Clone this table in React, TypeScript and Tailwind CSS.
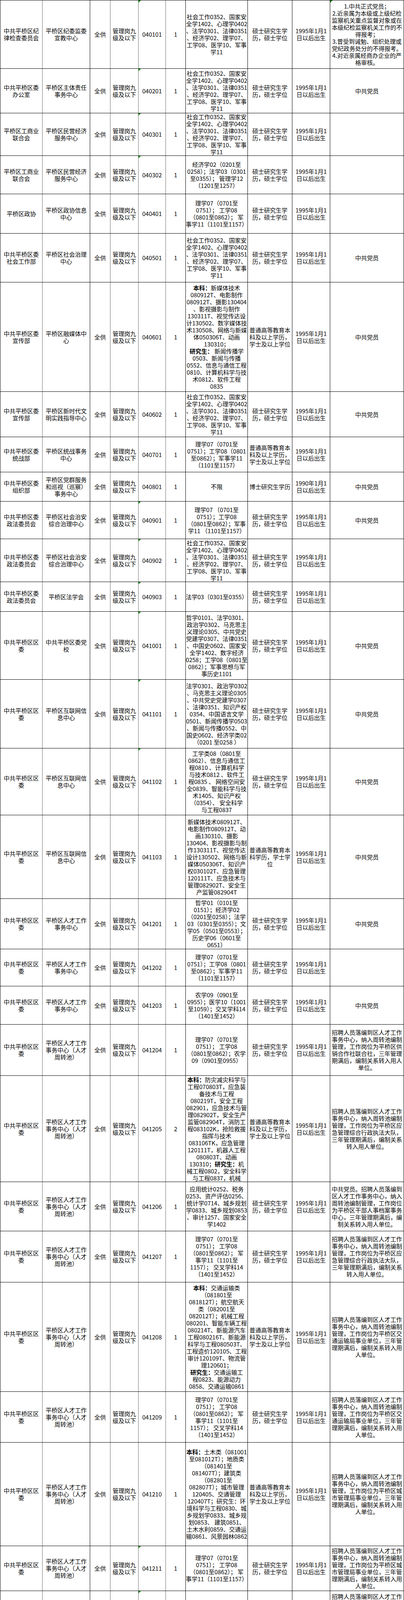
import React from "react";

type Line = string | [string, string];
type Row = {
  h: string;
  c1: string[];
  c2: string[];
  code: string;
  n: string;
  major: Line[];
  edu: string[];
  age: string[];
  note: string[];
  tri?: boolean;
  triNote?: boolean;
};

const SOC = [
  "社会工作0352、国家安",
  "全学1402、心理学0402",
  "、法学0301、法律0351",
  "、经济学02、理学07、",
  "工学08、医学10、军事",
  "学11",
];
const MASTER = ["硕士研究生学", "历，硕士学位"];
const BACH = ["普通高等教育本", "科及以上学历，", "学士及以上学位"];
const AGE95 = ["1995年1月1", "日以后出生"];
const QW = ["中共平桥区区", "委"];
const POOL = ["平桥区人才工作", "事务中心（人才", "周转池）"];
const TALENT = ["平桥区人才工作", "事务中心"];
const NET = ["平桥区互联网信", "息中心"];
const ZF = ["中共平桥区委", "政法委员会"];
const SCI4 = ["理学07（0701至", "0751）； 工学08", "（0801至0862）； 军", "事学11（1101至1157）"];
const SCI4B = ["理学07（0701至", "0751）；工学08（0801", "至0862）；军事学11", "（1101至1157）"];
const SCI6 = [
  "理学07（0701至",
  "0751）； 工学08",
  "（0801至0862）； 军",
  "事学11（1101至",
  "1157）； 交叉学科14",
  "（1401至1452）",
];
const PARTY = ["中共党员"];
const NOTE_YJ = [
  "招聘人员落编到区人才工作",
  "事务中心，纳入周转池编制",
  "管理，工作岗位为平桥区应",
  "急管理综合行政执法大队，",
  "三年管理期满后，编制关系",
  "转入用人单位。",
];
const NOTE_JT = [
  "招聘人员落编到区人才工作",
  "事务中心，纳入周转池编制",
  "管理，工作岗位为平桥区交",
  "通运输局事业单位，三年管",
  "理期满后，编制关系转入用",
  "人单位。",
];
const NOTE_CS = [
  "招聘人员落编到区人才工作",
  "事务中心，纳入周转池编制",
  "管理，工作岗位为平桥区城",
  "市管理局事业单位，三年管",
  "理期满后，编制关系转入用",
  "人单位。",
];

const rows: Row[] = [
  {
    h: "h-[175px]",
    c1: ["中共平桥区纪", "律检查委员会"],
    c2: ["平桥区纪委监委", "宣教中心"],
    code: "040101",
    n: "1",
    major: SOC,
    edu: MASTER,
    age: AGE95,
    note: [
      "1.中共正式党员；",
      "2.近亲属为本级或上级纪检",
      "监察机关重点监督对象或在",
      "本级纪检监察机关工作的不",
      "得报考；",
      "3.曾受到诫勉、组织处理或",
      "党纪政务处分的不得报考。",
      "4.对近亲属经商办企业的严",
      "格审核。",
    ],
    tri: true,
    triNote: true,
  },
  {
    h: "h-[114px]",
    c1: ["中共平桥区委", "办公室"],
    c2: ["平桥区主体责任", "事务中心"],
    code: "040201",
    n: "1",
    major: SOC,
    edu: MASTER,
    age: AGE95,
    note: PARTY,
    tri: true,
  },
  {
    h: "h-[109px]",
    c1: ["平桥区工商业", "联合会"],
    c2: ["平桥区民营经济", "服务中心"],
    code: "040301",
    n: "1",
    major: SOC,
    edu: MASTER,
    age: AGE95,
    note: [],
    tri: true,
  },
  {
    h: "h-[98px]",
    c1: ["平桥区工商业", "联合会"],
    c2: ["平桥区民营经济", "服务中心"],
    code: "040302",
    n: "1",
    major: ["经济学02（0201至", "0258）；法学03（0301", "至0355）； 管理学12", "（1201至1257）"],
    edu: MASTER,
    age: AGE95,
    note: [],
    tri: true,
  },
  {
    h: "h-[101px]",
    c1: ["平桥区政协"],
    c2: ["平桥区政协信息", "中心"],
    code: "040401",
    n: "1",
    major: SCI4,
    edu: MASTER,
    age: AGE95,
    note: [],
  },
  {
    h: "h-[125px]",
    c1: ["中共平桥区委", "社会工作部"],
    c2: ["平桥区社会治理", "中心"],
    code: "040501",
    n: "1",
    major: SOC,
    edu: MASTER,
    age: AGE95,
    note: PARTY,
  },
  {
    h: "h-[280px]",
    c1: ["中共平桥区委", "宣传部"],
    c2: ["平桥区融媒体中", "心"],
    code: "040601",
    n: "1",
    major: [
      ["本科：", "新媒体技术"],
      "080912T、电影制作",
      "080912T、摄影130404",
      "、影视摄影与制作",
      "130311T、视觉传达设",
      "计130502、数字媒体技",
      "术130508、网络与新媒",
      "体050306T、动画",
      "130310；",
      ["研究生：", " 新闻传播学"],
      "0503、新闻与传播",
      "0552、信息与通信工程",
      "0810、计算机科学与技",
      "术0812、软件工程",
      "0835",
    ],
    edu: BACH,
    age: AGE95,
    note: PARTY,
  },
  {
    h: "h-[116px]",
    c1: ["中共平桥区委", "宣传部"],
    c2: ["平桥区新时代文", "明实践指导中心"],
    code: "040602",
    n: "1",
    major: SOC,
    edu: MASTER,
    age: AGE95,
    note: PARTY,
  },
  {
    h: "h-[90px]",
    c1: ["中共平桥区委", "统战部"],
    c2: ["平桥区统战事务", "中心"],
    code: "040701",
    n: "1",
    major: SCI4B,
    edu: BACH,
    age: AGE95,
    note: [],
  },
  {
    h: "h-[75px]",
    c1: ["中共平桥区委", "组织部"],
    c2: ["平桥区党群服务", "和巡视（巡察）", "事务中心"],
    code: "040801",
    n: "1",
    major: ["不限"],
    edu: ["博士研究生学历"],
    age: ["1990年1月1", "日以后出生"],
    note: PARTY,
  },
  {
    h: "h-[96px]",
    c1: ZF,
    c2: ["平桥区社会治安", "综合治理中心"],
    code: "040901",
    n: "1",
    major: ["理学07 （0701至", "0751）；工学08", "（0801至0862）；军事", "学11 （1101至1157）"],
    edu: MASTER,
    age: AGE95,
    note: PARTY,
    tri: true,
  },
  {
    h: "h-[110px]",
    c1: ZF,
    c2: ["平桥区社会治安", "综合治理中心"],
    code: "040902",
    n: "1",
    major: SOC,
    edu: MASTER,
    age: AGE95,
    note: [],
    tri: true,
  },
  {
    h: "h-[76px]",
    c1: ZF,
    c2: ["平桥区法学会"],
    code: "040903",
    n: "1",
    major: ["法学03（0301至0355）"],
    edu: MASTER,
    age: AGE95,
    note: [],
    tri: true,
  },
  {
    h: "h-[174px]",
    c1: QW,
    c2: ["中共平桥区委党", "校"],
    code: "041001",
    n: "1",
    major: [
      "哲学0101、法学0301、",
      "政治学0302、马克思主",
      "义理论0305、中共党史",
      "党建学0307、法律0351",
      "、中国史0602、国家安",
      "全学1402、数字经济",
      "0258；工学08（0801至",
      "0862）；军事思想与军",
      "事历史1101",
    ],
    edu: MASTER,
    age: AGE95,
    note: PARTY,
    tri: true,
  },
  {
    h: "h-[176px]",
    c1: QW,
    c2: NET,
    code: "041101",
    n: "1",
    major: [
      "法学0301、政治学0302",
      "、马克思主义理论0305",
      "、中共党史党建学0307",
      "、法律0351、知识产权",
      "0354、中国语言文学",
      "0501、新闻传播学0503",
      "、新闻与传播0552、中",
      "国史0602、经济学类02",
      "（0201 至0258 ）",
    ],
    edu: MASTER,
    age: AGE95,
    note: PARTY,
    tri: true,
  },
  {
    h: "h-[171px]",
    c1: QW,
    c2: NET,
    code: "041102",
    n: "1",
    major: [
      "工学类08（0801至",
      "0862）、信息与通信工",
      "程0810 、计算机科学",
      "与技术0812 、软件工",
      "程0835 、 网络空间安",
      "全0839、智能科学与技",
      "术1405、知识产权",
      "（0354）、 安全科学",
      "与工程0837",
    ],
    edu: MASTER,
    age: AGE95,
    note: PARTY,
    tri: true,
  },
  {
    h: "h-[214px]",
    c1: QW,
    c2: NET,
    code: "041103",
    n: "1",
    major: [
      "新媒体技术080912T、",
      "电影制作080912T、动",
      "画130310、摄影",
      "130404、影视摄影与制",
      "作130311T、视觉传达",
      "设计130502、网络与新",
      "媒体050306T、知识产",
      "权030102T、应急管理",
      "120111T、应急技术与",
      "管理082902T、安全生",
      "产监管082904T",
    ],
    edu: ["普通高等教育本", "科学历，学士学", "位"],
    age: AGE95,
    note: PARTY,
  },
  {
    h: "h-[129px]",
    c1: QW,
    c2: TALENT,
    code: "041201",
    n: "1",
    major: [
      "哲学01（0101至",
      "0151）；经济学02",
      "（0201至0258）；法学",
      "03（0301至0355）；文",
      "学05（0501至0553）；",
      "历史学06（0601至",
      "0651）",
    ],
    edu: MASTER,
    age: AGE95,
    note: PARTY,
  },
  {
    h: "h-[95px]",
    c1: QW,
    c2: TALENT,
    code: "041202",
    n: "1",
    major: SCI4B,
    edu: MASTER,
    age: AGE95,
    note: [],
  },
  {
    h: "h-[98px]",
    c1: QW,
    c2: TALENT,
    code: "041203",
    n: "1",
    major: ["农学09（0901至", "0955）；医学10（1001", "至1059）；交叉学科14", "（1401至1452）"],
    edu: MASTER,
    age: AGE95,
    note: PARTY,
  },
  {
    h: "h-[131px]",
    c1: QW,
    c2: POOL,
    code: "041204",
    n: "1",
    major: ["理学07（0701至", "0751）； 工学08", "（0801至0862）；农学", "09（0901至0955）"],
    edu: MASTER,
    age: AGE95,
    note: [
      "招聘人员落编到区人才工作",
      "事务中心，纳入周转池编制",
      "管理，工作岗位为平桥区供",
      "销合作社联合社，三年管理",
      "期满后，编制关系转入用人",
      "单位。",
    ],
  },
  {
    h: "h-[272px]",
    c1: QW,
    c2: POOL,
    code: "041205",
    n: "2",
    major: [
      ["本科：", "防灾减灾科学与"],
      "工程070803T，应急装",
      "备技术与工程",
      "080219T，安全工程",
      "082901，应急技术与管",
      "理082902T，安全生产",
      "监管082904T，消防工",
      "程083102K，抢险救援",
      "指挥与技术",
      "083106TK，应急管理",
      "120111T，机器人工程",
      "080803T、动画",
      ["", "130310；"],
      "械工程0802，安全科学",
      "与工程0837，机械",
    ],
    edu: BACH,
    age: AGE95,
    note: NOTE_YJ,
  },
  {
    h: "h-[126px]",
    c1: QW,
    c2: POOL,
    code: "041206",
    n: "1",
    major: [
      "应用统计0252、税务",
      "0253、资产评估0256、",
      "统计学0714、城乡规划",
      "学0833、城乡规划0853",
      "、审计1257、国家安全",
      "学1402",
    ],
    edu: MASTER,
    age: AGE95,
    note: [
      "中共党员。招聘人员落编到",
      "区人才工作事务中心，纳入",
      "周转池编制管理，工作岗位",
      "为平桥区干部人事档案事务",
      "中心，三年管理期满后，编",
      "制关系转入用人单位。",
    ],
  },
  {
    h: "h-[131px]",
    c1: QW,
    c2: POOL,
    code: "041207",
    n: "1",
    major: SCI6,
    edu: MASTER,
    age: AGE95,
    note: NOTE_YJ,
  },
  {
    h: "h-[280px]",
    c1: QW,
    c2: POOL,
    code: "041208",
    n: "1",
    major: [
      ["本科：", "交通运输类"],
      "（081801至",
      "081812T）；航空航天",
      "类（082001至",
      "082012T）；机械工程",
      "080201、智能车辆工程",
      "080214T、新能源汽车",
      "工程080216T、新能源",
      "科学与工程080503T、",
      "工程造价120105、工程",
      "审计120109T、物流管",
      "理120601；",
      ["研究生：", "交通运输工"],
      "程0823、能源动力",
      "0858、交通运输0861",
    ],
    edu: BACH,
    age: AGE95,
    note: NOTE_JT,
  },
  {
    h: "h-[130px]",
    c1: QW,
    c2: POOL,
    code: "041209",
    n: "1",
    major: SCI6,
    edu: MASTER,
    age: AGE95,
    note: NOTE_JT,
  },
  {
    h: "h-[265px]",
    c1: QW,
    c2: POOL,
    code: "041210",
    n: "1",
    major: [
      ["本科：", "土木类（081001"],
      "至081012T）；地质类",
      "（081401至",
      "081407T）；建筑类",
      "（082801至",
      "082807T）；城市管理",
      "120405、交通管理",
      "120407T；研究生：环",
      "境科学与工程0830、城",
      "乡规划学0833、城乡规",
      "划0853、 建筑0851、",
      "土木水利0859、交通运",
      "输0861、风景园林0862",
    ],
    edu: BACH,
    age: AGE95,
    note: NOTE_CS,
  },
  {
    h: "h-[115px]",
    c1: QW,
    c2: POOL,
    code: "041211",
    n: "1",
    major: SCI4,
    edu: MASTER,
    age: AGE95,
    note: NOTE_CS,
    tri: true,
  },
  {
    h: "h-[119px]",
    c1: QW,
    c2: POOL,
    code: "041212",
    n: "1",
    major: SCI4,
    edu: MASTER,
    age: AGE95,
    note: [
      "招聘人员落编到区人才工作",
      "事务中心，纳入周转池编制",
      "管理，平桥区文化广电和旅",
      "游局事业单位，三年管理期",
      "满后，编制关系转入用人单",
      "位。",
    ],
    tri: true,
  },
  {
    h: "h-[264px]",
    c1: QW,
    c2: POOL,
    code: "041213",
    n: "1",
    major: [
      ["本科：", "水利类"],
      "（081101至",
      "081106T），农业水利",
      "工程082305、给排水科",
      "学与工程081003、道路",
      "桥梁与渡河工程",
      "081006T、土木、水利",
      "与海洋工程081009T、",
      "土木、水利与交通工程",
      "081010T、城市水系统",
      "工程081011T；地下水",
      "科学与工程081404T；",
      ["研究生：", "水利工程"],
      "0815、土木水利0859",
    ],
    edu: BACH,
    age: AGE95,
    note: [
      "招聘人员落编到区人才工作",
      "事务中心，纳入周转池编制",
      "管理，工作岗位为平桥区水",
      "利局事业单位，三年管理期",
      "满后，编制关系转入用人单",
      "位。",
    ],
    tri: true,
  },
];

function Lines({ lines }: { lines: Line[] }) {
  return (
    <>
      {lines.map((l, i) =>
        typeof l === "string" ? (
          <div key={i} className="whitespace-pre">
            {l}
          </div>
        ) : (
          <div key={i} className="whitespace-pre">
            {l[0] === "" ? (
              <>
                {l[1]}
                <span className="font-bold">研究生：</span>机
              </>
            ) : (
              <>
                <span className="font-bold">{l[0]}</span>
                {l[1]}
              </>
            )}
          </div>
        )
      )}
    </>
  );
}

function Tri() {
  return (
    <div className="absolute left-0 top-0 h-0 w-0 border-r-[6px] border-t-[6px] border-r-transparent border-t-[#1a8a1a]" />
  );
}

const base = "relative flex flex-col items-center justify-center text-center border-r";
const dark = `${base} border-black`;
const grey = `${base} border-[#6b6b6b]`;

export default function App() {
  return (
    <div
      className="w-[1035px] bg-white text-black text-[15px] leading-[18px]"
      style={{ fontFamily: '"Noto Sans CJK SC", "Noto Sans", sans-serif' }}
    >
      <div className="border-l border-t border-black">
        {rows.map((r) => (
          <div
            key={r.code}
            className={`grid grid-cols-[108px_122px_52px_72px_70px_51px_159px_114px_97px_189px] border-b border-black ${r.h}`}
          >
            <div className={grey}>
              <Lines lines={r.c1} />
            </div>
            <div className={dark}>
              <Lines lines={r.c2} />
            </div>
            <div className={grey}>全供</div>
            <div className={grey}>
              <div>管理岗九</div>
              <div>级及以下</div>
            </div>
            <div className={grey}>
              {r.tri ? <Tri /> : null}
              {r.code}
            </div>
            <div className={dark}>{r.n}</div>
            <div className={dark}>
              <Lines lines={r.major} />
            </div>
            <div className={dark}>
              <Lines lines={r.edu} />
            </div>
            <div className={dark}>
              <Lines lines={r.age} />
            </div>
            <div className={dark}>
              {r.triNote ? <Tri /> : null}
              <Lines lines={r.note} />
            </div>
          </div>
        ))}
      </div>
    </div>
  );
}
